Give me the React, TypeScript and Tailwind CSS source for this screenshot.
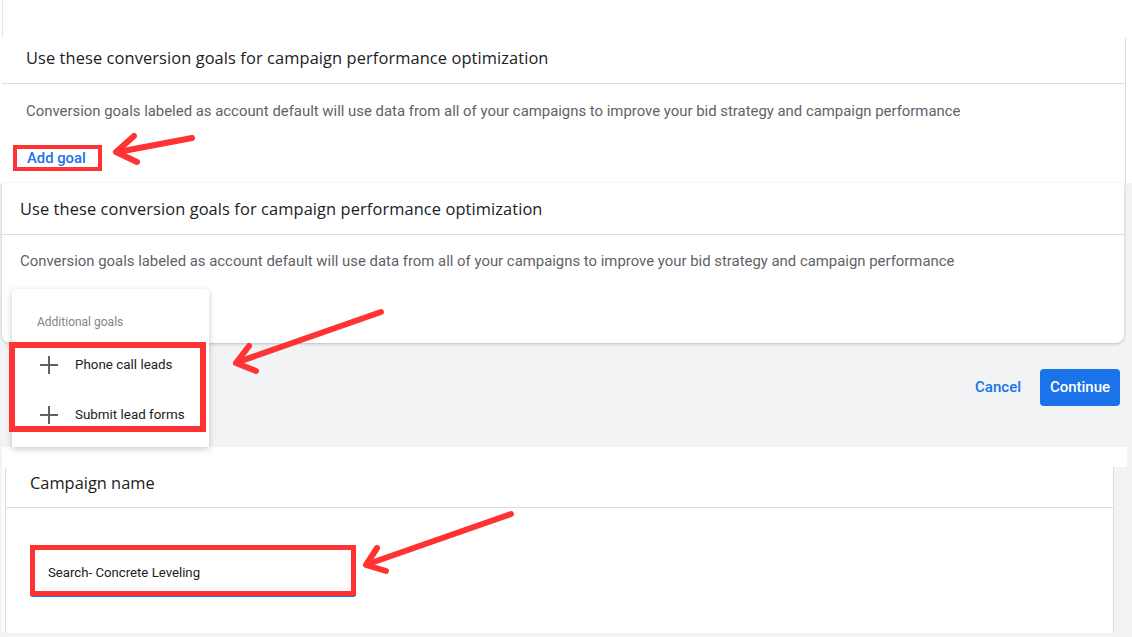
const titleFont = "font-['Open_Sans',sans-serif]";

const GoalsHeader = () => (
    <h2 className={`${titleFont} text-[16.4px] font-medium text-[#202124] tracking-[0.1px]`}>
        Use these conversion goals for campaign performance optimization
    </h2>
);

const goalsHint =
    "Conversion goals labeled as account default will use data from all of your campaigns to improve your bid strategy and campaign performance";

const PlusIcon = () => (
    <svg width="18" height="18" viewBox="0 0 18 18" fill="none" stroke="#5f6368" strokeWidth="2">
        <path d="M9 0 V18 M0 9 H18" />
    </svg>
);

const AdditionalGoalsMenu = () => (
    <div className="absolute left-[12px] top-[106px] w-[197px] h-[158px] bg-white rounded-t-[4px] shadow-[0_2px_6px_rgba(60,64,67,0.28)]">
        <div className="pt-[25px] pl-[25px] text-[12px] leading-4 text-[#80868b]">Additional goals</div>
        <div className="mt-[10px]">
            {["Phone call leads", "Submit lead forms"].map((goal) => (
                <div key={goal} className="h-[50px] flex items-center pl-[28px] gap-[17px]">
                    <PlusIcon />
                    <span className="text-[13.4px] text-[#202124]">{goal}</span>
                </div>
            ))}
        </div>
    </div>
);

// red callouts drawn over the page
const Callouts = () => (
    <div className="absolute inset-0 pointer-events-none">
        <div className="absolute left-[13px] top-[145px] w-[89px] h-[26px] border-[4px] border-[#ff3333]" />
        <div className="absolute left-[9px] top-[342px] w-[197px] h-[90px] border-[6px] border-[#ff3333]" />
        <div className="absolute left-[30px] top-[545px] w-[326px] h-[51px] border-[5px] border-[#ff3333]" />
        <svg width="1132" height="637" className="absolute inset-0" fill="none" stroke="#ff3333" strokeWidth="6" strokeLinecap="round" strokeLinejoin="round">
            <path d="M192 138 L118 152" />
            <path d="M134 136 L116 152 L137 162" />
            <path d="M381 312 L238 362" />
            <path d="M249 346 L236 363 L256 371" />
            <path d="M511 514 L368 564" />
            <path d="M377 548 L366 565 L386 571" />
        </svg>
    </div>
);

export default function App() {
    return (
        <div className="relative w-[1132px] h-[637px] overflow-hidden bg-white font-['Roboto',sans-serif]">
            {/* first goals panel with the link */}
            <section className="h-[183px] flex flex-col">
                <div className="h-[38px] ml-[2px] border-l border-[#e3e5e8]" />
                <div className="flex-1 ml-[2px] mr-[6px] border-r border-[#dadce0] flex flex-col">
                    <div className="h-[46px] pl-[24px] pb-[4px] border-b border-[#dadce0] flex items-center">
                        <GoalsHeader />
                    </div>
                    <p className="mt-[17px] pl-[24px] text-[14.9px] leading-5 text-[#5f6368]">{goalsHint}</p>
                    <button className="mt-[27px] ml-[25px] w-fit text-[14.8px] leading-5 font-medium text-[#1a73e8]">Add goal</button>
                </div>
            </section>

            {/* goals panel with the open menu */}
            <section className="relative h-[264px] bg-[#f1f3f4] flex flex-col">
                <div className="h-[160px] ml-[2px] mr-[8px] bg-white rounded-b-lg shadow-[0_1px_3px_rgba(60,64,67,0.3)] flex flex-col">
                    <div className="h-[52px] pl-[18px] pt-[1px] border-b border-[#dadce0] flex items-center">
                        <GoalsHeader />
                    </div>
                    <p className="mt-[16px] pl-[18px] text-[14.9px] leading-5 text-[#5f6368]">{goalsHint}</p>
                </div>
                <div className="mt-[26px] flex items-center justify-end pr-[12px]">
                    <button className="mr-[19px] text-[15px] font-medium text-[#1a73e8]">Cancel</button>
                    <button className="w-[80px] h-[37px] rounded-[4px] bg-[#1a73e8] text-[15px] font-medium text-white">Continue</button>
                </div>
                <AdditionalGoalsMenu />
            </section>

            {/* campaign name panel */}
            <section className="h-[190px] bg-[#f1f3f4] flex flex-col">
                <div className="h-[20px] ml-[2px] mr-[5px] bg-white" />
                <div className="flex-1 flex">
                    <div className="w-[3px] ml-[2px] bg-white" />
                    <div className="w-[1109px] bg-white border-x border-[#dadce0] flex flex-col">
                        <div className="h-[41px] pl-[24px] pb-[8px] border-b border-[#dadce0] flex items-center">
                            <h2 className={`${titleFont} text-[16.4px] font-medium text-[#202124]`}>Campaign name</h2>
                        </div>
                        <div className="mt-[38px] ml-[25px] w-[324px] h-[51px] border border-[#dadce0] border-b-2 border-b-[#1a73e8] rounded-t-[4px] flex items-center pl-[16px] pt-[4px]">
                            <span className="text-[13.2px] text-[#202124]">Search- Concrete Leveling</span>
                        </div>
                    </div>
                </div>
                <div className="h-[4px]" />
            </section>

            <Callouts />
        </div>
    );
}
